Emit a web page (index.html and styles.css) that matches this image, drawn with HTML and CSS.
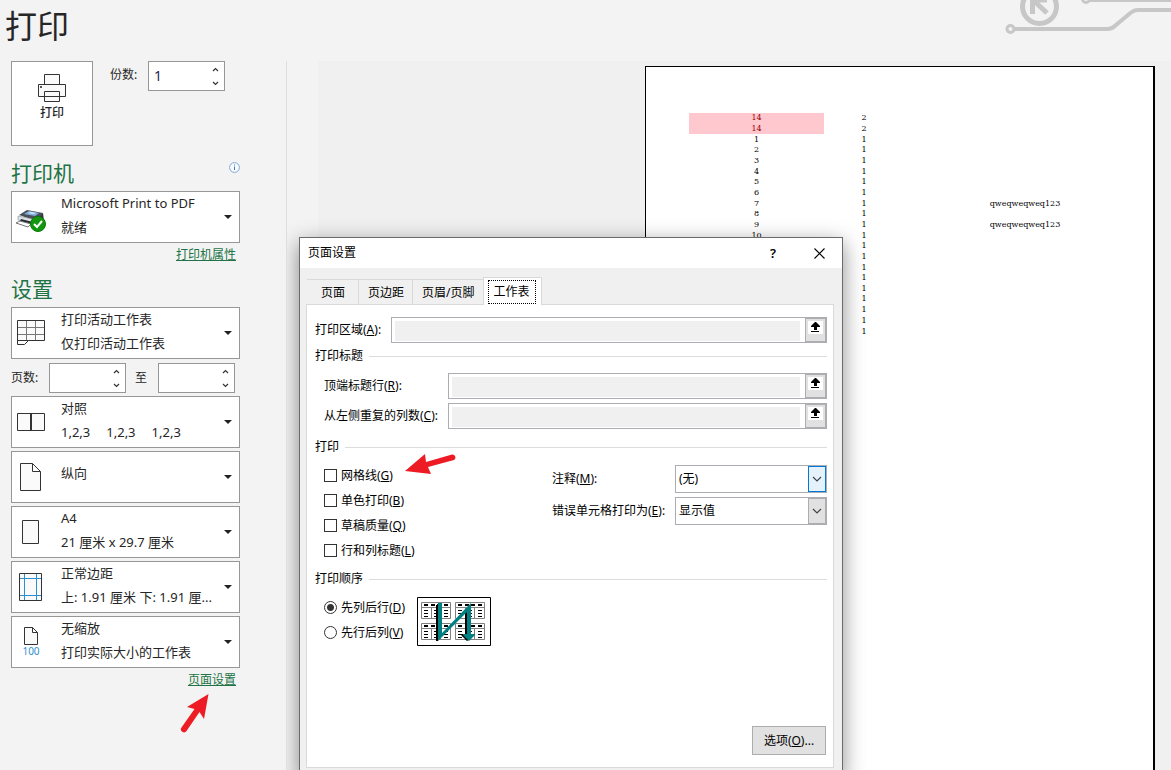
FILE: index.html
```html
<!DOCTYPE html>
<html lang="zh-CN">
<head>
<meta charset="utf-8">
<title>打印</title>
<link rel="stylesheet" href="styles.css">
</head>
<body>
<svg class="defs" aria-hidden="true">
  <symbol id="up" viewBox="0 0 7 5"><path d="M1 4l2.500-2.500L6 4" fill="none" stroke="#333" stroke-width="1.200"/></symbol>
  <symbol id="down" viewBox="0 0 7 5"><path d="M1 1l2.500 2.500L6 1" fill="none" stroke="#333" stroke-width="1.200"/></symbol>
  <symbol id="caret" viewBox="0 0 8 4"><path d="M0 0h8L4 4z" fill="#222"/></symbol>
  <symbol id="collapse" viewBox="0 0 15 13"><path d="M0 0h15v13H0z" fill="#fff"/><path d="M7 1h1l4 4v1H9v3H6V6H3V5z"/><path d="M3 10h8v1H3z"/></symbol>
  <symbol id="chevron" viewBox="0 0 10 6"><path d="M1 1l4 4 4-4" fill="none" stroke="#444" stroke-width="1.200"/></symbol>
  <symbol id="sheet" viewBox="0 0 30 17">
    <path d="M.5.5h29v16H.5zM10.500 5v12M19.500 5v12M.5 5.500h29" fill="#fff" stroke="#808080"/>
    <path d="M3 3h4M10 3h4M16 3h4M23 3h4" stroke="#000" stroke-width="2"/>
    <path d="M3 8.500h4M3 11.500h4M3 14.500h4M13 8.500h4M13 11.500h4M13 14.500h4M23 8.500h4M23 11.500h4M23 14.500h4" stroke="#000"/>
  </symbol>
</svg>

<header class="top">
  <h1>打印</h1>
  <svg class="circuit" viewBox="0 0 171 40" fill="none" stroke="#c7c7c7" stroke-width="4" aria-hidden="true">
    <circle cx="39.500" cy="6.500" r="17" stroke-width="5"/>
    <path d="M32.500 14V0M30 0h17M33 0l14 13" stroke-width="5"/>
    <circle cx="10.500" cy="29" r="3.500" stroke-width="3"/>
    <path d="M14 29h93c4 0 6-1 9-4l12-10c4-4 6-5 10-5h33"/>
    <circle cx="86" cy="-1" r="3.500" stroke-width="3"/>
    <path d="M89 0h82"/>
  </svg>
</header>

<main class="backstage">
  <aside class="side">
    <div class="print-row">
      <button class="print-btn" type="button">
        <svg width="28" height="28" viewBox="0 0 28 28" fill="#fafafa" stroke="#333" aria-hidden="true"><path d="M6.500.5h15v10h-15zM.5 10.500h27v12H.5zM6.500 17.500h15v10h-15z"/><path d="M2.500 12.500h1v1h-1z" fill="#333"/></svg>
        <span>打印</span>
      </button>
      <label class="copies-label" for="copies">份数:</label>
      <div class="spin"><input id="copies" type="text" inputmode="numeric" value="1"><div class="spin-btns"><button type="button" aria-label="增加"><svg><use href="#up"/></svg></button><button type="button" aria-label="减少"><svg><use href="#down"/></svg></button></div></div>
    </div>

    <div class="head head-printer">
      <h2>打印机</h2>
      <svg class="info" width="11" height="11" viewBox="0 0 11 11" aria-hidden="true"><circle cx="5.500" cy="5.500" r="4.900" fill="#f8fbff" stroke="#7da7dc"/><path d="M5.500 4.500V8M5.500 2.500v1" stroke="#3f74c0"/></svg>
    </div>
    <button class="combo" type="button" aria-haspopup="listbox">
      <svg class="icon" viewBox="0 0 38 30" aria-hidden="true">
        <path d="M7 13l8-5 16 3-4 9z" fill="#4a5058"/><path d="M12 12l5-3 10 2-4 3z" fill="#7fb0e2"/><path d="M16 11l3-1 5 1-3 1z" fill="#dcebfa"/>
        <path d="M6 14l19 4v5L6 18z" fill="#dfe2e6" stroke="#8a8d92" stroke-width=".6"/><path d="M25 18l6-7 1 8-7 6z" fill="#31363c"/>
        <path d="M9 17l12 3v2L8 19z" fill="#2a2e33"/><path d="M8 19l11 3-3 3-12-4z" fill="#fff" stroke="#555" stroke-width=".8"/>
        <circle cx="26" cy="22" r="7.500" fill="#12970f" stroke="#087a08"/><path d="M22 22l3 3 5-6" fill="none" stroke="#fff" stroke-width="2"/>
      </svg>
      <span class="text"><span>Microsoft Print to PDF</span><span>就绪</span></span>
      <svg class="caret"><use href="#caret"/></svg>
    </button>
    <a class="link" href="#printer">打印机属性</a>

    <div class="head"><h2>设置</h2></div>
    <div class="settings">
      <button class="combo" type="button" aria-haspopup="listbox">
        <svg class="icon" viewBox="0 0 38 30" aria-hidden="true"><path d="M5.500 2.500h27v20h-16l-4 4h-7z" fill="#fafafa"/><path d="M5.500 9.500h27M5.500 16.500h27M14.500 2.500v20M23.500 2.500v20" stroke="#777"/><path d="M5.500 2.500h27v20h-16l-4 4h-7zM5.500 22.500h11" fill="none" stroke="#333"/></svg>
        <span class="text"><span>打印活动工作表</span><span>仅打印活动工作表</span></span>
        <svg class="caret"><use href="#caret"/></svg>
      </button>
      <div class="pages">
        <label for="from">页数:</label>
        <div class="spin"><input id="from" type="text" inputmode="numeric"><div class="spin-btns"><button type="button" aria-label="增加"><svg><use href="#up"/></svg></button><button type="button" aria-label="减少"><svg><use href="#down"/></svg></button></div></div>
        <label class="to" for="to">至</label>
        <div class="spin"><input id="to" type="text" inputmode="numeric"><div class="spin-btns"><button type="button" aria-label="增加"><svg><use href="#up"/></svg></button><button type="button" aria-label="减少"><svg><use href="#down"/></svg></button></div></div>
      </div>
      <button class="combo" type="button" aria-haspopup="listbox">
        <svg class="icon" viewBox="0 0 38 30" fill="#fafafa" stroke="#333" aria-hidden="true"><path d="M5.500 6.500h27v17h-27z"/><path d="M19 6v18" stroke-width="2"/></svg>
        <span class="text"><span>对照</span><span class="sets"><span>1,2,3</span><span>1,2,3</span><span>1,2,3</span></span></span>
        <svg class="caret"><use href="#caret"/></svg>
      </button>
      <button class="combo combo-single" type="button" aria-haspopup="listbox">
        <svg class="icon" viewBox="0 0 38 30" fill="#fafafa" stroke="#333" aria-hidden="true"><path d="M8.500 1.500h12l8 8v19h-20zM20.500 1.500v8h8"/></svg>
        <span class="text"><span>纵向</span></span>
        <svg class="caret"><use href="#caret"/></svg>
      </button>
      <button class="combo" type="button" aria-haspopup="listbox">
        <svg class="icon" viewBox="0 0 38 30" fill="#fafafa" stroke="#333" aria-hidden="true"><path d="M10.500 3.500h16v23h-16z"/></svg>
        <span class="text"><span>A4</span><span>21 厘米 x 29.7 厘米</span></span>
        <svg class="caret"><use href="#caret"/></svg>
      </button>
      <button class="combo" type="button" aria-haspopup="listbox">
        <svg class="icon" viewBox="0 0 38 30" fill="none" aria-hidden="true"><path d="M7.500 1.500h22v27h-22z" fill="#fafafa"/><path d="M12.500 2v26M24.500 2v26M8 6.500h21M8 23.500h21" stroke="#2b8fd0"/><path d="M7.500 1.500h22v27h-22z" stroke="#333"/></svg>
        <span class="text"><span>正常边距</span><span>上: 1.91 厘米 下: 1.91 厘...</span></span>
        <svg class="caret"><use href="#caret"/></svg>
      </button>
      <button class="combo" type="button" aria-haspopup="listbox">
        <span class="icon zoom">
          <svg width="14" height="18" viewBox="0 0 14 18" fill="#fafafa" stroke="#333" aria-hidden="true"><path d="M.5.5h8l5 5v12H.5zM8.500.5v5h5"/></svg>
          <span>100</span>
        </span>
        <span class="text"><span>无缩放</span><span>打印实际大小的工作表</span></span>
        <svg class="caret"><use href="#caret"/></svg>
      </button>
    </div>
    <a class="link" href="#page-setup">页面设置</a>
  </aside>

  <section class="preview">
    <div class="canvas">
      <div class="paper">
        <table class="cells">
          <colgroup><col class="c1"><col class="c2"><col class="c3"></colgroup>
          <tbody>
            <tr><td class="dup">14</td><td>2</td><td></td></tr>
            <tr><td class="dup">14</td><td>2</td><td></td></tr>
            <tr><td>1</td><td>1</td><td></td></tr>
            <tr><td>2</td><td>1</td><td></td></tr>
            <tr><td>3</td><td>1</td><td></td></tr>
            <tr><td>4</td><td>1</td><td></td></tr>
            <tr><td>5</td><td>1</td><td></td></tr>
            <tr><td>6</td><td>1</td><td></td></tr>
            <tr><td>7</td><td>1</td><td>qweqweqweq123</td></tr>
            <tr><td>8</td><td>1</td><td></td></tr>
            <tr><td>9</td><td>1</td><td>qweqweqweq123</td></tr>
            <tr><td>10</td><td>1</td><td></td></tr>
            <tr><td></td><td>1</td><td></td></tr>
            <tr><td></td><td>1</td><td></td></tr>
            <tr><td></td><td>1</td><td></td></tr>
            <tr><td></td><td>1</td><td></td></tr>
            <tr><td></td><td>1</td><td></td></tr>
            <tr><td></td><td>1</td><td></td></tr>
            <tr><td></td><td>1</td><td></td></tr>
            <tr><td></td><td>1</td><td></td></tr>
            <tr><td></td><td>1</td><td></td></tr>
          </tbody>
        </table>
      </div>
    </div>

    <div class="dialog" role="dialog" aria-labelledby="dlg-title">
      <div class="titlebar">
        <span id="dlg-title">页面设置</span>
        <button class="tb-btn" type="button" aria-label="帮助">?</button>
        <button class="tb-btn" type="button" aria-label="关闭"><svg width="11" height="11" viewBox="0 0 11 11" aria-hidden="true"><path d="M.5.5l10 10M10.500.5l-10 10" stroke="#000" stroke-width="1.100"/></svg></button>
      </div>
      <div class="dlg-body">
        <div class="tabs" role="tablist">
          <button type="button" role="tab">页面</button>
          <button type="button" role="tab">页边距</button>
          <button type="button" role="tab">页眉/页脚</button>
          <button type="button" role="tab" class="active" aria-selected="true"><span>工作表</span></button>
        </div>
        <div class="panel" role="tabpanel">
          <div class="field field-area"><label for="area">打印区域(<u>A</u>):</label><div class="ref"><input id="area" type="text"><button type="button" aria-label="选择区域"><svg><use href="#collapse"/></svg></button></div></div>
          <div class="group"><span>打印标题</span></div>
          <div class="titles">
            <div class="field"><label for="rows">顶端标题行(<u>R</u>):</label><div class="ref"><input id="rows" type="text"><button type="button" aria-label="选择行"><svg><use href="#collapse"/></svg></button></div></div>
            <div class="field"><label for="cols">从左侧重复的列数(<u>C</u>):</label><div class="ref"><input id="cols" type="text"><button type="button" aria-label="选择列"><svg><use href="#collapse"/></svg></button></div></div>
          </div>
          <div class="group"><span>打印</span></div>
          <div class="options">
            <div class="checks">
              <label><input type="checkbox"><span>网格线(<u>G</u>)</span></label>
              <label><input type="checkbox"><span>单色打印(<u>B</u>)</span></label>
              <label><input type="checkbox"><span>草稿质量(<u>Q</u>)</span></label>
              <label><input type="checkbox"><span>行和列标题(<u>L</u>)</span></label>
            </div>
            <div class="selects">
              <label for="notes">注释(<u>M</u>):</label>
              <div class="select hot"><select id="notes"><option>(无)</option></select><span class="arrow"><svg><use href="#chevron"/></svg></span></div>
              <label for="errors">错误单元格打印为(<u>E</u>):</label>
              <div class="select"><select id="errors"><option>显示值</option></select><span class="arrow"><svg><use href="#chevron"/></svg></span></div>
            </div>
          </div>
          <div class="group"><span>打印顺序</span></div>
          <div class="order">
            <div class="checks">
              <label><input type="radio" name="order" checked><span>先列后行(<u>D</u>)</span></label>
              <label><input type="radio" name="order"><span>先行后列(<u>V</u>)</span></label>
            </div>
            <svg class="order-pic" width="74" height="49" viewBox="0 0 74 49" aria-hidden="true">
              <path d="M.5.500h73v48H.5z" fill="#fff" stroke="#000"/>
              <use href="#sheet" x="4" y="5" width="30" height="17"/><use href="#sheet" x="38" y="5" width="30" height="17"/>
              <use href="#sheet" x="4" y="26" width="30" height="17"/><use href="#sheet" x="38" y="26" width="30" height="17"/>
              <path d="M19 8h2v36h-2zM48 13h2v24l3 5-3 2-6-6v-1h4z"/>
              <path d="M21 6h4v30L50 10l4-4v31h4v1l-6 6-6-6v-1h4V15L21 44z" fill="#008080"/>
            </svg>
          </div>
          <div class="dlg-foot"><button type="button">选项(<u>O</u>)...</button></div>
        </div>
      </div>
    </div>
  </section>
</main>

<svg class="mark mark-grid" width="52" height="24" viewBox="0 0 52 24" aria-hidden="true"><path d="M1 18L21 1l1 8L48 1.500a3 3 0 0 1 2 5.500L24 14l3 7z" fill="#ed1c24"/></svg>
<svg class="mark mark-link" width="30" height="42" viewBox="0 0 30 42" aria-hidden="true"><path d="M28.500 1L24 26l-4.500-7L6.500 38a3 3 0 0 1-5-3.500L14.500 16 7 14z" fill="#ed1c24"/></svg>
</body>
</html>
```
FILE: styles.css
```css
* { box-sizing: border-box; }
body {
  margin: 0;
  height: 100vh;
  display: flex;
  flex-direction: column;
  position: relative;
  overflow: hidden;
  background: #f3f3f3;
  color: #262626;
  font: 13px/24px "Noto Sans", "Noto Sans CJK SC", sans-serif;
}
button, input, select { font: inherit; color: inherit; margin: 0; padding: 0; border-radius: 0; }
h1, h2 { margin: 0; font-weight: 400; }
svg { display: block; flex: none; }
.defs { position: absolute; width: 0; height: 0; }

.top { flex: none; display: flex; justify-content: space-between; height: 61px; padding-left: 5px; overflow: hidden; }
.top h1 { font-size: 32px; line-height: 52px; }
.circuit { width: 171px; height: 40px; }

.backstage { flex: 1; display: flex; min-height: 0; }
.side { flex: none; width: 287px; padding: 0 46px 0 11px; border-right: 1px solid #dedede; }

.print-row { display: flex; align-items: flex-start; font-size: 12px; }
.print-btn {
  width: 82px; height: 85px; padding-top: 12px;
  display: flex; flex-direction: column; align-items: center;
  background: #fff; border: 1px solid #979797;
  font-weight: 500; line-height: 22px;
}
.copies-label { width: 55px; padding-left: 17px; line-height: 28px; white-space: nowrap; }

.spin { display: flex; width: 77px; height: 30px; background: #fff; border: 1px solid #979797; }
.spin input { flex: 1; min-width: 0; border: 0; outline: 0; padding-left: 5px; background: none; font-size: 14px; color: #2b2250; }
.spin-btns { display: flex; flex-direction: column; width: 17px; }
.spin-btns button { flex: 1; display: flex; align-items: center; justify-content: center; border: 0; background: none; }
.spin-btns svg { width: 7px; height: 5px; }

.head { display: flex; justify-content: space-between; margin: 6px 0 2px; }
.head-printer { margin-top: 11px; }
.head h2 { font-size: 21px; line-height: 32px; color: #217346; }
.info { margin-top: 5px; }

.combo {
  display: flex; align-items: center; width: 100%; height: 52px;
  background: #fff; border: 1px solid #979797; text-align: left;
}
.icon { width: 38px; height: 30px; }
.combo .text { flex: 1; min-width: 0; padding-left: 11px; display: flex; flex-direction: column; white-space: nowrap; padding-bottom: 5px; }
.combo-single .text { padding-bottom: 8px; }
.sets { display: flex; gap: 16px; }
.caret { width: 8px; height: 4px; margin-right: 7px; }
.zoom { display: flex; flex-direction: column; align-items: center; font-size: 10px; line-height: 12px; color: #2b8fd0; }
.link { display: block; width: fit-content; margin-left: auto; margin-right: 4px; font-size: 12px; color: #217346; }

.settings { display: flex; flex-direction: column; gap: 3px; }
.pages { display: flex; align-items: center; font-size: 12px; padding-top: 1px; }
.pages label { width: 38px; line-height: 26px; white-space: nowrap; }
.pages .to { width: 32px; padding-right: 2px; text-align: center; }

.preview { flex: 1; min-width: 0; position: relative; overflow: hidden; }
.canvas { display: flex; justify-content: flex-end; margin-left: 31px; padding: 5px 16px 0 0; height: 100%; background: #f0f0f0; }
.paper { width: 510px; padding: 46px 0 0 43px; background: #fff; border: 1px solid #000; border-right-width: 2px; border-bottom: 0; }
.cells { table-layout: fixed; border-collapse: collapse; width: 457px; height: 224px; font: 8px/10px "DejaVu Serif", serif; color: #000; text-align: center; }
.cells td { padding: 0; }
.c1 { width: 135px; }
.c2 { width: 80px; }
.cells .dup { background: #ffc7ce; color: #9c0006; }

.dialog {
  position: absolute; left: 12px; top: 176px; width: 544px;
  background: #f0f0f0; border: 1px solid #6b6b6b; color: #000;
  box-shadow: 0 6px 20px rgba(0, 0, 0, .45);
  font-size: 12px; line-height: 20px;
}
.titlebar { display: flex; align-items: center; height: 30px; padding-left: 8px; background: #fff; }
.titlebar > span { flex: 1; }
.tb-btn { width: 46px; height: 28px; display: flex; align-items: center; justify-content: center; border: 0; background: none; font-size: 13px; font-weight: 600; }
.dlg-body { padding: 9px 8px 7px 6px; }
.tabs { display: flex; align-items: flex-end; padding-left: 1px; }
.tabs button { height: 25px; padding: 1px 8px 0 9px; border: 1px solid #d9d9d9; border-width: 1px 1px 0 0; background: #f0f0f0; white-space: nowrap; }
.tabs button:first-child { padding: 1px 13px 0 14px; }
.tabs .active { position: relative; height: 28px; margin: 0 0 -1px -1px; padding: 0 5px 0 4px; background: #fff; border-left-width: 1px; }
.tabs .active span { display: block; padding: 1px 5px; border: 1px dotted #000; }

.panel { background: #fff; border: 1px solid #d9d9d9; padding: 12px 6px 12px 8px; }
.field { display: flex; align-items: center; }
.field label { flex: none; width: 76px; white-space: nowrap; }
.titles { display: flex; flex-direction: column; gap: 4px; padding-left: 9px; }
.titles label { width: 124px; }
.ref { flex: 1; min-width: 0; display: flex; height: 26px; border: 1px solid #abadb3; }
.ref input { flex: 1; min-width: 0; margin: 3px 5px 1px 3px; border: 0; background: #f0f0f0; }
.ref button { width: 21px; display: flex; padding: 2px; border: 1px solid #adadad; background: #e1e1e1; }
.ref svg { width: 15px; height: 13px; }

.group { display: flex; align-items: center; gap: 6px; height: 24px; margin: 6px 0 4px; }
.group::after { content: ""; flex: 1; height: 1px; background: #dcdcdc; }
.field-area + .group { margin: 1px 0 5px; }
.options + .group { margin: 4px 0; }
.options, .order { display: flex; }
.options { justify-content: space-between; }
.checks { padding-left: 9px; }
.checks label { display: flex; align-items: center; gap: 4px; height: 25px; white-space: nowrap; }
.checks input { appearance: none; width: 13px; height: 13px; border: 1px solid #333; background: #fff; }
.checks input[type="radio"] { border-radius: 50%; }
.checks input[type="radio"]:checked { background: radial-gradient(circle, #333 0 3px, #fff 4px); }

.selects { display: grid; grid-template-columns: 123px 152px; row-gap: 4px; align-content: start; align-items: center; padding-top: 2px; white-space: nowrap; }
.select { display: grid; height: 28px; border: 1px solid #abadb3; }
.select select { grid-area: 1 / 1; appearance: none; border: 0; padding-left: 3px; background: #fff; }
.arrow { grid-area: 1 / 1; justify-self: end; width: 18px; display: flex; align-items: center; justify-content: center; background: #e1e1e1; border: 1px solid #adadad; pointer-events: none; }
.arrow svg { width: 10px; height: 6px; }
.hot .arrow { background: #e5f1fb; border-color: #0078d7; }

.order-pic { margin: 2px 0 0 12px; }
.dlg-foot { display: flex; justify-content: flex-end; margin-top: 80px; padding-right: 1px; }
.dlg-foot button { width: 74px; height: 29px; border: 1px solid #adadad; background: #e1e1e1; }

.mark { position: absolute; }
.mark-grid { left: 404px; top: 453px; }
.mark-link { left: 180px; top: 693px; }
```
